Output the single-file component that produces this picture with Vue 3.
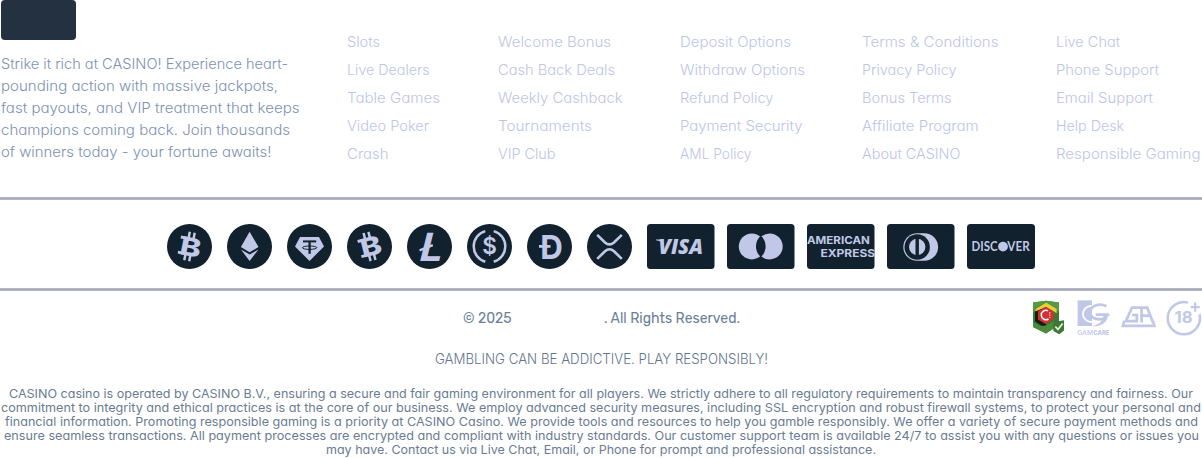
<script setup>
const columns = [
  { x: 151, links: [['Slots', 33], ['Live Dealers', 82.5], ['Table Games', 93], ['Video Poker', 82], ['Crash', 41.5]] },
  { x: 182, links: [['Welcome Bonus', 113], ['Cash Back Deals', 117], ['Weekly Cashback', 124.5], ['Tournaments', 94], ['VIP Club', 57.5]] },
  { x: 182, links: [['Deposit Options', 111], ['Withdraw Options', 125], ['Refund Policy', 93.5], ['Payment Security', 122.5], ['AML Policy', 71.5]] },
  { x: 194, links: [['Terms & Conditions', 136.5], ['Privacy Policy', 94.5], ['Bonus Terms', 89.5], ['Affiliate Program', 116.5], ['About CASINO', 98.5]] },
  { x: 146, links: [['Live Chat', 64], ['Phone Support', 103], ['Email Support', 97], ['Help Desk', 68], ['Responsible Gaming', 144.5]] },
]
const intro = [
  ['Strike it rich at CASINO! Experience heart-', 287],
  ['pounding action with massive jackpots,', 277],
  ['fast payouts, and VIP treatment that keeps', 298.5],
  ['champions coming back. Join thousands', 289],
  ['of winners today - your fortune awaits!', 270.5],
]
const legal = [
  ['CASINO casino is operated by CASINO B.V., ensuring a secure and fair gaming environment for all players. We strictly adhere to all regulatory requirements to maintain transparency and fairness. Our', 1184],
  ['commitment to integrity and ethical practices is at the core of our business. We employ advanced security measures, including SSL encryption and robust firewall systems, to protect your personal and', 1200],
  ['financial information. Promoting responsible gaming is a priority at CASINO Casino. We provide tools and resources to help you gamble responsibly. We offer a variety of secure payment methods and', 1193],
  ['ensure seamless transactions. All payment processes are encrypted and compliant with industry standards. Our customer support team is available 24/7 to assist you with any questions or issues you', 1195],
  ['may have. Contact us via Live Chat, Email, or Phone for prompt and professional assistance.', 550],
]

// Widens the letterforms so that a line sets to the given measure.
const vFit = {
  mounted(el, { value }) {
    const natural = el.getBoundingClientRect().width
    el.style.width = `${value}px`
    el.style.transform = `scaleX(${(value / natural).toFixed(5)})`
  },
}
</script>

<template>
  <footer class="footer">
    <section class="top">
      <div class="about">
        <div class="logo"></div>
        <p class="intro">
          <span v-for="[t, w] in intro" :key="t" class="line"><span v-fit="w" class="fit">{{ t }}</span></span>
        </p>
      </div>
      <nav class="nav">
        <ul v-for="(c, i) in columns" :key="i" :style="{ width: c.x + 'px' }">
          <li v-for="[t, w] in c.links" :key="t"><a v-fit="w" class="fit">{{ t }}</a></li>
        </ul>
      </nav>
    </section>

    <div class="rule"></div>

    <section class="payments">
      <svg class="coin" viewBox="0 0 45 45">
        <circle class="bg" cx="22.5" cy="22.5" r="22.5" />
        <g transform="rotate(11 22.5 22.5)">
          <text x="13.4" y="31.8" font-size="25.5" font-weight="800" textLength="21" lengthAdjust="spacingAndGlyphs">B</text>
          <path class="ln" stroke-width="2.5" d="M20 8v7M25 8v7M20 30v7M25 30v7" />
          <path class="ln" stroke-width="2.9" d="M12.2 14.8h6M12.2 30.3h6" />
        </g>
      </svg>
      <svg class="coin" viewBox="0 0 45 45">
        <circle class="bg" cx="22.5" cy="22.5" r="22.5" />
        <path d="M22.6 7.7 31.5 23.1 22.6 28.2 13.9 23.1Z M13.9 25.5 22.6 30.6 31.5 25.5 22.6 37Z" />
      </svg>
      <svg class="coin" viewBox="0 0 45 45">
        <circle class="bg" cx="22.5" cy="22.5" r="22.5" />
        <path d="M13 13H32L37 22.5 22.5 37 8 22.5Z" />
        <path class="dark" stroke-width="2" d="M16 17.4H29.2" />
        <path class="dark" stroke-width="2.3" d="M22.6 17V29.8" />
        <ellipse class="dark" stroke-width="1" cx="22.6" cy="23.7" rx="7.2" ry="1.7" />
      </svg>
      <svg class="coin" viewBox="0 0 45 45">
        <circle class="bg" cx="22.5" cy="22.5" r="22.5" />
        <g transform="rotate(-14 22.5 22.5)">
          <text x="13.4" y="31.8" font-size="25.5" font-weight="800" textLength="21" lengthAdjust="spacingAndGlyphs">B</text>
          <path class="ln" stroke-width="2.5" d="M20 8v7M25 8v7M20 30v7M25 30v7" />
          <path class="ln" stroke-width="2.9" d="M12.2 14.8h6M12.2 30.3h6" />
        </g>
      </svg>
      <svg class="coin" viewBox="0 0 45 45">
        <circle class="bg" cx="22.5" cy="22.5" r="22.5" />
        <g transform="translate(13 36.7) skewX(-14)">
          <text x="-2.4" y="0" font-size="39" font-weight="700" textLength="23" lengthAdjust="spacingAndGlyphs">L</text>
        </g>
        <path class="ln" stroke-width="2.4" d="M12.6 26.4 25.8 21.2" />
      </svg>
      <svg class="coin" viewBox="0 0 45 45">
        <circle class="bg" cx="22.5" cy="22.5" r="22.5" />
        <path class="ln" stroke-width="2.5" d="M18.3 7.1A15.9 15.9 0 0 0 18.3 37.7M26.7 7.1A15.9 15.9 0 0 1 26.7 37.7" />
        <text x="22.5" y="30.1" font-size="22.5" font-weight="600" text-anchor="middle">$</text>
      </svg>
      <svg class="coin" viewBox="0 0 45 45">
        <circle class="bg" cx="22.5" cy="22.5" r="22.5" />
        <text x="13.2" y="34.6" font-size="32.6" font-weight="700" textLength="22.6" lengthAdjust="spacingAndGlyphs">D</text>
        <path class="ln" stroke-width="2.8" d="M12 22.4H23.5" />
      </svg>
      <svg class="coin" viewBox="0 0 45 45">
        <circle class="bg" cx="22.5" cy="22.5" r="22.5" />
        <path class="ln" stroke-width="2.6" d="M10.2 10.9 18 18.5Q22.5 22.4 27 18.5L34.8 10.9M10.2 34.9 18 27.3Q22.5 23.2 27 27.3L34.8 34.9" />
      </svg>

      <svg class="card" viewBox="0 0 67.5 45">
        <rect class="bg" width="67.5" height="45" rx="3.5" />
        <text class="visa" x="11.4" y="30" font-size="20.5" textLength="44.6" lengthAdjust="spacingAndGlyphs">VISA</text>
        <path d="M9 15.4H15.4L17 20Q14 16.7 9 16.2Z" />
      </svg>
      <svg class="card" viewBox="0 0 67.5 45">
        <rect class="bg" width="67.5" height="45" rx="3.5" />
        <circle cx="24.8" cy="22.4" r="13" /><circle cx="42.7" cy="22.4" r="13" />
        <path class="bg" d="M33.8 11.8A14 14 0 0 1 33.8 33A14 14 0 0 1 33.8 11.8Z" />
      </svg>
      <svg class="card" viewBox="0 0 67.5 45">
        <rect class="bg" width="67.5" height="45" rx="3.5" />
        <g font-size="11" font-weight="700">
          <text x="0" y="20" textLength="62.8" lengthAdjust="spacingAndGlyphs">AMERICAN</text>
          <text x="13.4" y="33.2" textLength="54.8" lengthAdjust="spacingAndGlyphs">EXPRESS</text>
        </g>
      </svg>
      <svg class="card" viewBox="0 0 67.5 45">
        <rect class="bg" width="67.5" height="45" rx="3.5" />
        <rect x="16.3" y="9.2" width="34.8" height="27.6" rx="13.8" />
        <circle class="bg" cx="30.2" cy="23" r="12.7" /><circle cx="30.2" cy="23" r="8.2" />
        <rect class="bg" x="28.5" y="14" width="3.4" height="18" />
      </svg>
      <svg class="card last" viewBox="0 0 68 45">
        <rect class="bg" width="68" height="45" rx="3.5" />
        <g class="discover" font-size="12.8">
          <text x="4.6" y="27.1" textLength="26" lengthAdjust="spacingAndGlyphs">DISC</text>
          <text x="40.3" y="27.1" textLength="22.4" lengthAdjust="spacingAndGlyphs">VER</text>
        </g>
        <circle cx="36" cy="22.6" r="4.9" />
      </svg>
    </section>

    <div class="rule"></div>

    <section class="bottom">
      <div class="copy"><span v-fit="48.5" class="fit">© 2025</span><span v-fit="136" class="fit">. All Rights Reserved.</span></div>
      <div class="badges">
        <svg class="cube" viewBox="0 0 32 35">
          <path fill="#3a7a35" d="M0 2.6 13 .7 26 2.6V25L13 33.5 0 27Z" />
          <path fill="#579a45" d="M0 2.6 13 .7 26 2.6V12L13 4 0 12Z" />
          <path fill="#171d14" d="M2 9 13 2.6V26L8 25.5 2 21.5Z" />
          <path fill="#e7cf35" d="M2.3 9 13 2.6 23.7 9V13.2L13 7 2.3 11.6Z" />
          <path fill="#d42f35" d="M5 11.2 12.7 6.8 20.5 11.2V19.6L12.7 24 5 19.6Z" />
          <path fill="none" stroke="#fff" stroke-width="1.5" d="M15 10.8A4.7 4.7 0 1 0 15.5 19" />
          <path fill="none" stroke="#fff" stroke-width=".8" stroke-dasharray="1.6 .8" d="M16.8 12V18" />
          <path fill="#4a8c3c" d="M0 22 8 26.4 13 25.4 21 21V28L13 33.5 0 27Z" />
          <path fill="#3a7a35" d="M20.3 22 31 20.2V30.5L26.3 34.2 20.3 31Z" />
          <path fill="none" stroke="#eef6dd" stroke-width="1.7" d="M22.3 26.5 25 29.4 29.6 23.4" />
        </svg>
        <svg class="gam" viewBox="0 0 33 36">
          <rect x=".6" y=".4" width="14.4" height="25.6" />
          <path fill="none" stroke="#fff" stroke-width="1.7" d="M16 5.6C6 6 3.6 14.5 8.5 19.6Q11 22 16 22.2" />
          <path class="ln" stroke-width="2.8" d="M29.5 6.2C23 3 14 5 13.2 11.6C12.8 17.5 18.5 20.6 27 18.6" />
          <path d="M18.7 13.2H31.6L33 15.6 30.8 15.9C30.4 22 24.5 26.8 14.5 26.2 21 25 25.5 22 26.4 15.9H18.7Z" />
          <text x=".2" y="35.1" font-size="6.3" font-weight="500" textLength="16" lengthAdjust="spacingAndGlyphs">GAM</text>
          <text x="16.3" y="35.1" font-size="6.3" font-weight="800" textLength="16" lengthAdjust="spacingAndGlyphs">CARE</text>
        </svg>
        <svg class="ga" viewBox="0 0 35 26">
          <path class="ln" stroke-width="2.7" d="M19.4 5.6H11L4.8 19.2H15.8V13H11M20.6 20.6V5.6H26.2L32 20.6M20.6 13.6H28.5" />
          <path class="ln" stroke-width="2.6" d="M3.2 18.8 1.9 23.9H33.4L32.2 19.4" />
        </svg>
        <svg class="age" viewBox="0 0 36 36">
          <path class="ln" stroke-width="2.5" d="M22 2.6A16.1 16.1 0 1 0 33.5 14.4" />
          <text x="8.6" y="22.9" font-size="15.8" font-weight="700" textLength="18" lengthAdjust="spacingAndGlyphs">18</text>
          <path class="ln" stroke-width="2.2" d="M29.2 2.5V11.7M24.6 7.1H33.8" />
        </svg>
      </div>
    </section>

    <p class="warning"><span v-fit="333" class="fit">GAMBLING CAN BE ADDICTIVE. PLAY RESPONSIBLY!</span></p>
    <p class="legal"><span v-for="[t, w] in legal" :key="t" class="line"><span v-fit="w" class="fit">{{ t }}</span></span></p>
  </footer>
</template>

<style>
body { background: #fff; overflow: hidden; }
</style>

<style scoped>
.footer { width: 1202px; height: 458px; overflow: hidden; font-family: Inter, "Noto Sans", sans-serif; font-feature-settings: "cv11"; }
p, ul { margin: 0; padding: 0; list-style: none; }
.fit { display: inline-block; white-space: nowrap; transform-origin: 0 50%; }
.line { display: block; }
.top { display: flex; height: 197px; }
.about { width: 346px; padding-left: 1px; }
.logo { width: 75px; height: 40px; border-radius: 4px; background: #243141; }
.intro { margin-top: 13px; font-size: 14px; font-weight: 350; line-height: 22px; color: #7d91b2; }
.intro .line { height: 22px; }
.nav { display: flex; padding-top: 28px; }
.nav li { height: 28px; line-height: 28px; font-size: 14px; font-weight: 350; color: #bdc5e7; }
.rule { height: 1px; background: #a2a6b6; border: solid #b5b8c5; border-width: 1px 0; }
.payments { display: flex; height: 64px; padding: 24px 0 0 167px; }
.payments svg, .badges svg { fill: #c1c8e7; display: block; flex: none; overflow: visible; }
.coin { width: 45px; height: 45px; margin-right: 15px; }
.card { width: 67.5px; height: 45px; margin-right: 12.5px; }
.card.last { width: 68px; margin-right: 0; }
.payments .bg { fill: #11212d; }
.ln { fill: none; stroke: #c1c8e7; }
.dark { fill: none; stroke: #11212d; }
.visa { font-family: "Open Sans", sans-serif; font-weight: 800; font-style: italic; }
.discover { font-family: Lato, sans-serif; font-weight: 700; }
.bottom { display: flex; height: 51px; }
.copy { display: flex; gap: 92px; width: 570px; padding-left: 463px; padding-top: 18px; font: 14px/20px Rubik, Roboto, sans-serif; color: #6d8098; }
.badges { display: flex; padding-top: 9px; }
.cube { width: 32px; height: 35px; }
.gam { width: 33px; height: 36px; margin-left: 12px; }
.ga { width: 35px; height: 26px; margin: 2px 0 0 11px; }
.age { width: 36px; height: 36px; margin-left: 10px; }
.warning { height: 20px; margin-top: 7px; line-height: 20px; font-size: 14px; font-weight: 350; text-align: center; color: #62758e; }
.legal { margin-top: 18px; font-size: 12px; line-height: 14px; color: #6a7b92; }
.legal .line { height: 14px; display: flex; justify-content: center; }
</style>
